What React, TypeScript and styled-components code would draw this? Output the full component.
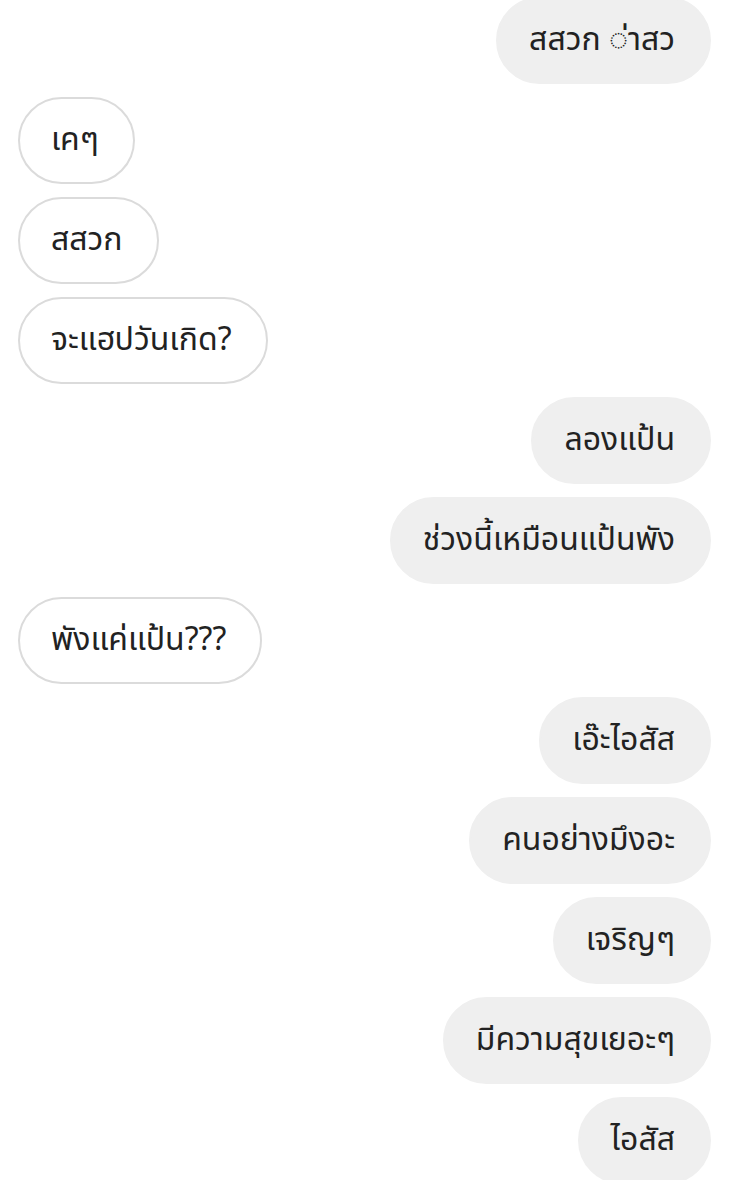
import React from "react";
import styled, { createGlobalStyle } from "styled-components";

const Global = createGlobalStyle`
  html, body { margin: 0; padding: 0; background: #ffffff; }
  body { font-family: "Noto Sans Thai", "Noto Sans", "DejaVu Sans", sans-serif; }
`;

const Screen = styled.div`
  width: 735px;
  height: 1180px;
  overflow: hidden;
  background: #ffffff;
`;

const Thread = styled.div`
  display: flex;
  flex-direction: column;
  gap: 13px;
  padding: 0 24px 0 18px;
  margin-top: -3px;
`;

const Row = styled.div<{ $mine: boolean }>`
  display: flex;
  justify-content: ${(p) => (p.$mine ? "flex-end" : "flex-start")};
`;

const Bubble = styled.div<{ $mine: boolean }>`
  box-sizing: border-box;
  height: 87px;
  display: flex;
  align-items: center;
  padding: 0 34px 2px 31px;
  border-radius: 44px;
  font-size: 32px;
  color: #222222;
  white-space: nowrap;
  background: ${(p) => (p.$mine ? "#efefef" : "#ffffff")};
  border: 2px solid ${(p) => (p.$mine ? "#efefef" : "#dbdbdb")};
`;

const messages: { text: string; mine: boolean }[] = [
  { text: "สสวก ◌่าสว", mine: true },
  { text: "เคๆ", mine: false },
  { text: "สสวก", mine: false },
  { text: "จะแฮปวันเกิด?", mine: false },
  { text: "ลองแป้น", mine: true },
  { text: "ช่วงนี้เหมือนแป้นพัง", mine: true },
  { text: "พังแค่แป้น???", mine: false },
  { text: "เอ๊ะไอสัส", mine: true },
  { text: "คนอย่างมึงอะ", mine: true },
  { text: "เจริญๆ", mine: true },
  { text: "มีความสุขเยอะๆ", mine: true },
  { text: "ไอสัส", mine: true },
];

export default function App() {
  return (
    <>
      <Global />
      <Screen>
        <Thread>
          {messages.map((m, i) => (
            <Row key={i} $mine={m.mine}>
              <Bubble $mine={m.mine}>{m.text}</Bubble>
            </Row>
          ))}
        </Thread>
      </Screen>
    </>
  );
}
